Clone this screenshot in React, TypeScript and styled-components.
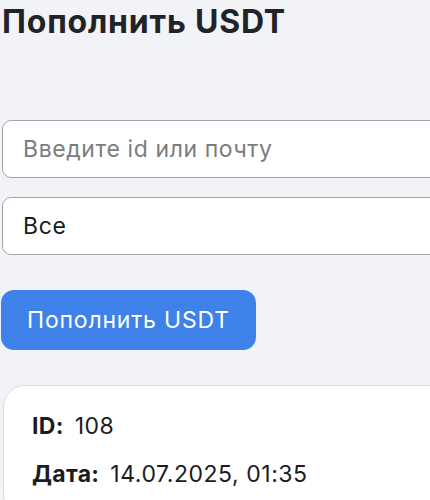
import styled, { createGlobalStyle } from 'styled-components';

const GlobalStyle = createGlobalStyle`
  html, body {
    margin: 0;
    padding: 0;
    background: #f2f3f7;
    overflow: hidden;
    font-family: Inter, "Noto Sans", sans-serif;
    color: #1c1c1e;
  }
`;

const Page = styled.div`
  width: 480px;
  padding: 3px 0 0 2px;
`;

const Title = styled.h1`
  margin: 0 0 80px;
  font-size: 32px;
  line-height: 37px;
  font-weight: 700;
  letter-spacing: 0.8px;
  color: #222327;
`;

const Form = styled.div`
  display: flex;
  flex-direction: column;
  gap: 19px;
`;

const Field = styled.input`
  box-sizing: border-box;
  width: 100%;
  height: 58px;
  padding: 0 20px;
  border: 1.5px solid #a4a5a9;
  border-radius: 9px;
  background: #fff;
  font-family: inherit;
  font-size: 23px;
  letter-spacing: 0.6px;
  color: #1c1c1e;
  outline: none;

  &::placeholder {
    color: #7b7c80;
  }
`;

const Select = styled.div`
  box-sizing: border-box;
  width: 100%;
  height: 58px;
  padding: 0 20px;
  display: flex;
  align-items: center;
  border: 1.5px solid #a4a5a9;
  border-radius: 9px;
  background: #fff;
  font-size: 23px;
  letter-spacing: 0.6px;
  color: #1c1c1e;
`;

const Button = styled.button`
  align-self: flex-start;
  margin: 16px 0 0 -1px;
  height: 60px;
  padding: 0 26px;
  border: none;
  border-radius: 13px;
  background: #3e81e8;
  color: #fff;
  font-family: inherit;
  font-size: 23px;
  letter-spacing: 0.8px;
  cursor: pointer;
`;

const Card = styled.div`
  margin: 35px 0 0 1px;
  padding: 25px 28px;
  background: #fff;
  border: 1.5px solid #dcdde1;
  border-radius: 22px;
  display: flex;
  flex-direction: column;
  gap: 18px;
`;

const Row = styled.div`
  font-size: 23px;
  line-height: 30px;
  letter-spacing: 0.55px;
  color: #1c1c1e;
`;

const Label = styled.b`
  font-weight: 700;
  letter-spacing: 0.3px;
  margin-right: 11px;
`;

const deposit = { id: 108, date: '14.07.2025, 01:35' };

export default function App() {
  return (
    <Page>
      <GlobalStyle />
      <Title>Пополнить USDT</Title>
      <Form>
        <Field placeholder="Введите id или почту" />
        <Select>Все</Select>
        <Button>Пополнить USDT</Button>
      </Form>
      <Card>
        <Row>
          <Label>ID:</Label>
          {deposit.id}
        </Row>
        <Row>
          <Label>Дата:</Label>
          {deposit.date}
        </Row>
      </Card>
    </Page>
  );
}
